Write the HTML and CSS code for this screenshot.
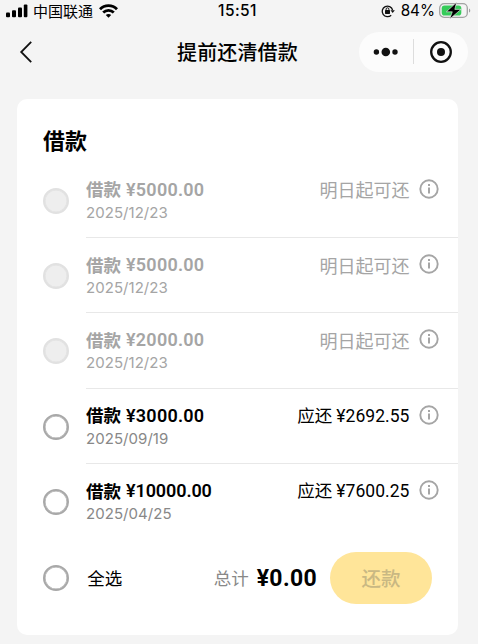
FILE: index.html
```html
<!DOCTYPE html>
<html lang="zh-CN">
<head>
<meta charset="utf-8">
<title>提前还清借款</title>
<link rel="stylesheet" href="styles.css">
</head>
<body>
<svg width="0" height="0" class="defs">
  <symbol id="info" viewBox="0 0 20 20"><circle cx="10" cy="10" r="8.7" fill="none" stroke="currentColor" stroke-width="1.9"/><path d="M10 8.6v5.8M10 5v2" stroke="currentColor" stroke-width="2"/></symbol>
</svg>
<header class="status">
  <div class="status-left">
    <svg class="signal" width="22" height="14" viewBox="0 0 22 14"><rect x="0" y="8.6" width="4" height="4.6" rx="1"/><rect x="6" y="6.2" width="4" height="7" rx="1"/><rect x="12" y="3.4" width="4" height="9.8" rx="1"/><rect x="17.8" y="0.4" width="3.6" height="12.8" rx="1"/></svg>
    <span class="carrier">中国联通</span>
    <svg class="wifi" width="19" height="14" viewBox="0 0 19 14" fill="none" stroke="#000" stroke-width="2.8"><path d="M1 5.2C5.6.4 13.4.4 18 5.2M4.2 8.6c3-2.9 7.6-2.9 10.6 0"/><path d="M9.5 13.8 6.8 11.1c1.5-1.4 3.9-1.4 5.4 0Z" fill="#000" stroke="none"/></svg>
  </div>
  <span class="clock">15:51</span>
  <div class="status-right">
    <svg width="14" height="14" viewBox="0 0 14 14" fill="none" stroke="#111" stroke-width="1.3"><path d="M10.2 11.2A5.3 5.3 0 1 1 11.6 6"/><path d="M9.5 6.2h4.3l-2.1 2.9Z" fill="#111" stroke="none"/><rect x="4" y="6.1" width="5" height="3.8" rx=".6" fill="#111" stroke="none"/><path d="M5.1 6.4V5.2a1.4 1.4 0 0 1 2.8 0v1.2" stroke-width="1"/></svg>
    <span class="percent">84%</span>
    <svg class="battery" width="32" height="18" viewBox="0 0 32 18"><rect x=".7" y="1.7" width="27.6" height="13.6" rx="4.4" fill="none" stroke="#a2a2a2" stroke-width="1.3"/><path d="M30 6.4c1.7.6 1.7 3.6 0 4.2Z" fill="#a2a2a2"/><rect x="2.7" y="3.5" width="19.6" height="10" rx="2.8" fill="#35cb59"/><path d="M17.6.3 7.4 9.8h5.9L10.7 17 22 7.4h-6.2Z" fill="#000" stroke="#f4f4f4" stroke-width=".6"/></svg>
  </div>
</header>
<nav class="nav">
  <svg class="back" width="14" height="24" viewBox="0 0 14 24"><path d="M12.2 1.8 2.2 12l10 10.2" fill="none" stroke="#111" stroke-width="1.8"/></svg>
  <h1>提前还清借款</h1>
  <div class="capsule">
    <svg width="26" height="12" viewBox="0 0 26 12" fill="#111"><circle cx="3.4" cy="6" r="2.7"/><circle cx="12.8" cy="6" r="4.3"/><circle cx="22" cy="6" r="2.7"/></svg>
    <i></i>
    <svg width="24" height="24" viewBox="0 0 24 24"><circle cx="12" cy="12" r="9.8" fill="none" stroke="#111" stroke-width="2.3"/><circle cx="12" cy="12" r="4" fill="#111"/></svg>
  </div>
</nav>
<main class="card">
  <h2>借款</h2>
  <ul class="loans">
    <li class="loan disabled"><span class="radio"></span><div class="body"><div class="top"><b>借款</b><strong>¥5000.00</strong><span class="due wait">明日起可还</span><svg class="info"><use href="#info"/></svg></div><time>2025/12/23</time></div></li>
    <li class="loan disabled"><span class="radio"></span><div class="body"><div class="top"><b>借款</b><strong>¥5000.00</strong><span class="due wait">明日起可还</span><svg class="info"><use href="#info"/></svg></div><time>2025/12/23</time></div></li>
    <li class="loan disabled"><span class="radio"></span><div class="body"><div class="top"><b>借款</b><strong>¥2000.00</strong><span class="due wait">明日起可还</span><svg class="info"><use href="#info"/></svg></div><time>2025/12/23</time></div></li>
    <li class="loan"><span class="radio"></span><div class="body"><div class="top"><b>借款</b><strong>¥3000.00</strong><span class="due">应还<em>¥2692.55</em></span><svg class="info"><use href="#info"/></svg></div><time>2025/09/19</time></div></li>
    <li class="loan"><span class="radio"></span><div class="body"><div class="top"><b>借款</b><strong class="long">¥10000.00</strong><span class="due">应还<em>¥7600.25</em></span><svg class="info"><use href="#info"/></svg></div><time>2025/04/25</time></div></li>
  </ul>
  <footer class="summary">
    <span class="radio"></span><span class="all">全选</span>
    <span class="label">总计</span><strong class="total">¥0.00</strong>
    <button type="button" disabled>还款</button>
  </footer>
</main>
</body>
</html>
```

FILE: styles.css
```css
* { box-sizing: border-box; }
body { margin: 0; width: 478px; height: 644px; overflow: hidden; background: #f4f4f4; color: #000; font-family: "Noto Sans CJK SC", sans-serif; }
h1, h2, ul { margin: 0; padding: 0; list-style: none; }
svg { display: block; flex: none; }
.defs { position: absolute; }
.status { height: 22px; display: grid; grid-template-columns: 1fr auto 1fr; align-items: center; padding: 0 7px 0 6px; }
.status-left, .status-right { display: flex; align-items: center; height: 22px; }
.status-right { justify-content: flex-end; }
.carrier { font-size: 15px; line-height: 22px; margin: 0 6px 0 5px; }
.clock { font: 500 15.5px/22px Inter, sans-serif; letter-spacing: .45px; padding-right: 2px; }
.percent { font: 400 15.3px/22px Inter, sans-serif; margin: 0 4px 0 6px; }
.nav { height: 59px; display: grid; grid-template-columns: 158px auto 1fr; align-items: center; padding: 0 10px 0 19px; }
.nav h1 { font-size: 20px; line-height: 28px; font-weight: 500; letter-spacing: .15px; }
.capsule { justify-self: end; width: 109px; height: 40px; border-radius: 20px; background: #fcfcfc; display: flex; align-items: center; padding-left: 14px; }
.capsule i { width: 1px; height: 25px; background: #ddd; margin: 0 15px 0 14px; }
.card { margin: 18px 0 0 17px; width: 441px; height: 536px; background: #fff; border-radius: 10px; padding-top: 23px; }
.card h2 { font-size: 22px; line-height: 34px; font-weight: 700; padding-left: 26px; height: 40.5px; }
.loan { height: 75.35px; display: flex; padding-left: 25.6px; }
.radio { flex: none; width: 26px; height: 26px; border: 2px solid #a8a8a8; border-radius: 50%; box-shadow: inset 0 0 0 .5px #a8a8a8; }
.loan .radio { margin: 25px 17.4px 0 0; }
.disabled .radio { border-color: #e1e1e1; background: #eee; box-shadow: inset 0 0 0 .5px #e1e1e1; }
.body { flex: 1; padding-top: 14.8px; border-bottom: 1px solid #e8e8e8; }
.loan:last-child .body { border: 0; }
.top { display: flex; align-items: center; height: 24px; padding-right: 19.5px; font-size: 17.5px; line-height: 24px; }
.top b { font-weight: 700; }
.top strong { font: 600 18px/24px Roboto, sans-serif; margin: 1px 0 0 5px; letter-spacing: .25px; }
.top .long { letter-spacing: -.1px; }
.due { margin-left: auto; }
.due em { font: 400 17.5px/24px Roboto, sans-serif; margin-left: 4px; letter-spacing: .05px; }
.wait { font-size: 18px; }
.info { width: 20px; height: 20px; margin: -1px 0 0 9px; color: #a5a5a5; }
time { display: block; font: 400 15px/21px Inter, sans-serif; color: #888; padding-top: .5px; letter-spacing: .05px; }
.disabled .top, .disabled time { color: #a5a5a5; }
.summary { height: 52px; margin-top: 12.7px; display: flex; align-items: center; padding: 0 26px 0 25.6px; }
.all { font-size: 17.5px; margin-left: 18.6px; }
.label { font-size: 17.5px; color: #888; margin-left: auto; }
.total { font: 700 23px/30px Roboto, sans-serif; letter-spacing: .35px; margin: 1px 13px 0 8px; padding-top: 1px; }
.summary button { width: 102px; height: 52px; padding: 0; border: 0; border-radius: 26px; background: #ffe599; color: #c9b883; font: 500 19.5px/28px "Noto Sans CJK SC", sans-serif; }
```
